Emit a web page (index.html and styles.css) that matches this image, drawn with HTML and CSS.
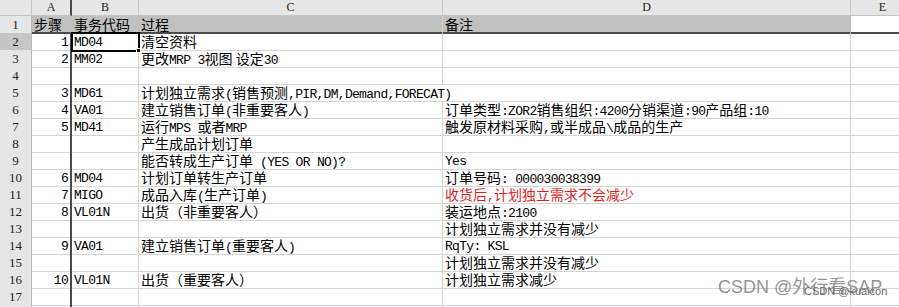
FILE: index.html
```html
<!DOCTYPE html>
<html>
<head>
<meta charset="utf-8">
<title>SAP 步骤</title>
<link rel="stylesheet" href="styles.css">
</head>
<body>
<div class="sheet">
  <div class="row head"><div class="corner"></div><div>A</div><div>B</div><div>C</div><div>D</div><div>E</div></div>
  <div class="row title"><div class="rh">1</div><div>步骤</div><div>事务代码</div><div>过程</div><div>备注</div><div></div></div>
  <div class="row"><div class="rh sel">2</div><div class="num">1</div><div class="code active">MD04</div><div>清空资料</div><div></div><div></div></div>
  <div class="row"><div class="rh">3</div><div class="num">2</div><div class="code">MM02</div><div>更改<span class="en">MRP 3</span>视图 设定<span class="en">30</span></div><div></div><div></div></div>
  <div class="row"><div class="rh">4</div><div></div><div></div><div></div><div></div><div></div></div>
  <div class="row"><div class="rh">5</div><div class="num">3</div><div class="code">MD61</div><div class="ovf">计划独立需求<span class="en">(</span>销售预测<span class="en">,PIR,DM,Demand,FORECAT)</span></div><div></div><div></div></div>
  <div class="row"><div class="rh">6</div><div class="num">4</div><div class="code">VA01</div><div>建立销售订单<span class="en">(</span>非重要客人<span class="en">)</span></div><div>订单类型<span class="en">:ZOR2</span>销售组织<span class="en">:4200</span>分销渠道<span class="en">:90</span>产品组<span class="en">:10</span></div><div></div></div>
  <div class="row"><div class="rh">7</div><div class="num">5</div><div class="code">MD41</div><div>运行<span class="en">MPS </span>或者<span class="en">MRP</span></div><div>触发原材料采购<span class="en">,</span>或半成品<span class="en">\</span>成品的生产</div><div></div></div>
  <div class="row"><div class="rh">8</div><div></div><div></div><div>产生成品计划订单</div><div></div><div></div></div>
  <div class="row"><div class="rh">9</div><div></div><div></div><div>能否转成生产订单<span class="en"> (YES OR NO)?</span></div><div class="en-cell">Yes</div><div></div></div>
  <div class="row"><div class="rh">10</div><div class="num">6</div><div class="code">MD04</div><div>计划订单转生产订单</div><div>订单号码<span class="en">: 000030038399</span></div><div></div></div>
  <div class="row"><div class="rh">11</div><div class="num">7</div><div class="code">MIGO</div><div>成品入库<span class="en">(</span>生产订单<span class="en">)</span></div><div class="red">收货后<span class="en">,</span>计划独立需求不会减少</div><div></div></div>
  <div class="row"><div class="rh">12</div><div class="num">8</div><div class="code">VL01N</div><div>出货（非重要客人）</div><div>装运地点<span class="en">:2100</span></div><div></div></div>
  <div class="row"><div class="rh">13</div><div></div><div></div><div></div><div>计划独立需求并没有减少</div><div></div></div>
  <div class="row"><div class="rh">14</div><div class="num">9</div><div class="code">VA01</div><div>建立销售订单<span class="en">(</span>重要客人<span class="en">)</span></div><div class="en-cell">RqTy: KSL</div><div></div></div>
  <div class="row"><div class="rh">15</div><div></div><div></div><div></div><div>计划独立需求并没有减少</div><div></div></div>
  <div class="row"><div class="rh">16</div><div class="num">10</div><div class="code">VL01N</div><div>出货（重要客人）</div><div>计划独立需求减少</div><div></div></div>
  <div class="row"><div class="rh">17</div><div></div><div></div><div></div><div></div><div></div></div>
  <div class="row"><div class="rh"></div><div></div><div></div><div></div><div></div><div></div></div>
</div>
<div class="wm">CSDN @外行看SAP</div>
<div class="wm2">CSDN @kuaicon</div>
</body>
</html>
```

FILE: styles.css
```css
html, body {
  margin: 0;
  padding: 0;
  background: #ffffff;
  overflow: hidden;
}
body {
  width: 899px;
  height: 307px;
  position: relative;
  font-family: "Noto Sans CJK SC", "Liberation Serif", serif;
  font-size: 14px;
  color: #000;
}
.sheet {
  width: 915px;
}
.row {
  display: grid;
  grid-template-columns: 32px 40px 67px 304px 408px 64px;
  height: 17px;
}
.row > div {
  box-sizing: border-box;
  border-right: 1px solid #d4d4d4;
  border-bottom: 1px solid #d4d4d4;
  line-height: 16px;
  white-space: nowrap;
  padding: 0 2px;
  position: relative;
}
.row > div:nth-child(2) {
  border-right: 2px solid #4a4a4a;
}
.row.head {
  height: 16px;
}
.head > div {
  background: #e6e6e6;
  border-right-color: #c8c8c8;
  border-bottom-color: #c4c4c4;
  text-align: center;
  font-family: "Liberation Serif", serif;
  font-size: 12px;
  line-height: 15px;
  color: #222;
}
.row > div.rh {
  background: #e6e6e6;
  border-right-color: #b8b8b8;
  border-bottom-color: #c8c8c8;
  text-align: center;
  font-family: "Liberation Serif", serif;
  font-size: 13px;
  line-height: 17px;
  color: #222;
}
.row > div.rh.sel {
  background: #c6c6c6;
}
.title > div:not(.rh) {
  background: #c0c0c0;
  border-bottom: 2px solid #4a4a4a;
  border-right-color: #c0c0c0;
}
.title > div:nth-child(4) {
  border-right-color: #d4d4d4;
}
.title > div:last-child {
  background: #fff;
  border-right-color: #d4d4d4;
}
.row > div.num,
.row > div.code,
.row > div.en-cell {
  font-family: "Liberation Mono", monospace;
  font-size: 13px;
  letter-spacing: -0.7px;
  line-height: 12px;
  padding-top: 4px;
}
.row > div.num {
  text-align: right;
  padding-right: 2px;
}
.en {
  font-family: "Liberation Mono", monospace;
  font-size: 13px;
  letter-spacing: -0.7px;
  line-height: 0;
}
.row > div.ovf {
  border-right-color: transparent;
}
.red {
  color: #dd1f1f;
}
.active {
  outline: 2px solid #000;
  outline-offset: -1px;
  z-index: 2;
}
.active::after {
  content: "";
  position: absolute;
  right: -3px;
  bottom: -3px;
  width: 5px;
  height: 5px;
  background: #000;
  border: 1px solid #fff;
  box-sizing: border-box;
}
.wm {
  position: absolute;
  left: 718px;
  top: 276px;
  font-family: "Liberation Sans", "Noto Sans CJK SC", sans-serif;
  font-size: 18px;
  line-height: 22px;
  color: rgba(120, 120, 120, 0.8);
  white-space: nowrap;
}
.wm2 {
  position: absolute;
  left: 804px;
  top: 284px;
  font-family: "Liberation Sans", sans-serif;
  font-size: 11px;
  line-height: 14px;
  color: #6a6a6a;
  white-space: nowrap;
}
```
